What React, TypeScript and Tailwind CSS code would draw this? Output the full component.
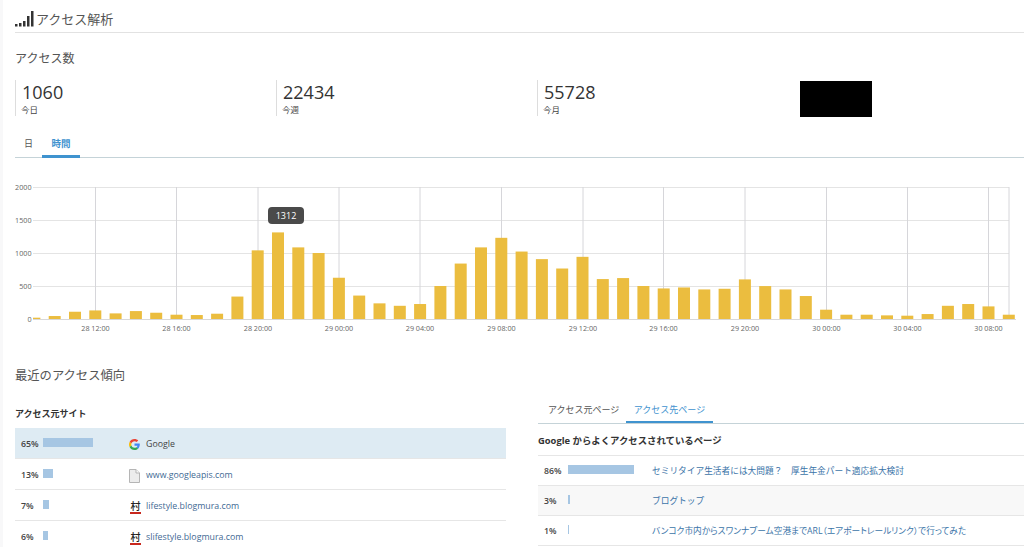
const FONT = "font-['Open_Sans','Noto_Sans_CJK_JP',sans-serif]";

const hours = [
  20, 45, 110, 130, 85, 120, 95, 65, 60, 80, 340, 1040, 1312, 1085, 1000, 625, 355,
  237, 200, 227, 500, 840, 1085, 1230, 1022, 907, 765, 942, 605, 620, 500, 463, 478,
  448, 458, 600, 499, 448, 348, 141, 65, 65, 55, 50, 75, 200, 227, 191, 65,
];

const ticks = [
  { x: 95.5, label: "28 12:00" },
  { x: 176.5, label: "28 16:00" },
  { x: 258, label: "28 20:00" },
  { x: 339, label: "29 00:00" },
  { x: 420, label: "29 04:00" },
  { x: 501.5, label: "29 08:00" },
  { x: 583, label: "29 12:00" },
  { x: 663.5, label: "29 16:00" },
  { x: 745, label: "29 20:00" },
  { x: 826.5, label: "30 00:00" },
  { x: 907.5, label: "30 04:00" },
  { x: 988.5, label: "30 08:00" },
];

const sources = [
  { pct: "65%", bar: 50, name: "Google", icon: "google", active: true },
  { pct: "13%", bar: 10, name: "www.googleapis.com", icon: "file" },
  { pct: "7%", bar: 6, name: "lifestyle.blogmura.com", icon: "mura" },
  { pct: "6%", bar: 5, name: "slifestyle.blogmura.com", icon: "mura" },
];

const pages = [
  { pct: "86%", bar: 66, title: "セミリタイア生活者には大問題？　厚生年金パート適応拡大検討" },
  { pct: "3%", bar: 2, title: "ブログトップ", alt: true },
  { pct: "1%", bar: 1, title: "バンコク市内からスワンナプーム空港までARL（エアポートレールリンク）で行ってみた", tight: true },
];

function SignalIcon() {
  return (
    <svg width="20" height="16" viewBox="0 0 20 16" fill="#333">
      <rect x="0" y="13" width="2.5" height="2.5" />
      <rect x="4" y="12" width="2.5" height="3.5" />
      <rect x="8" y="10" width="2.5" height="5.5" />
      <rect x="12" y="5" width="2.5" height="10.5" />
      <rect x="16" y="0" width="2.5" height="15.5" />
    </svg>
  );
}

function GoogleIcon() {
  return (
    <svg width="11" height="11" viewBox="0 0 48 48">
      <path fill="#EA4335" d="M24 9.5c3.5 0 6.700 1.200 9.200 3.600l6.900-6.900C35.900 2.400 30.500 0 24 0 14.600 0 6.500 5.400 2.600 13.200l8 6.200C12.500 13.600 17.800 9.500 24 9.500z" />
      <path fill="#4285F4" d="M47 24.500c0-1.600-.1-3.100-.4-4.500H24v9h13c-.6 3-2.300 5.500-4.800 7.200l7.700 6C44.400 37.900 47 31.800 47 24.500z" />
      <path fill="#FBBC05" d="M10.600 28.600c-.5-1.500-.8-3-.8-4.600s.3-3.100.8-4.600l-8-6.200C.9 16.500 0 20.100 0 24s.9 7.500 2.600 10.800l8-6.200z" />
      <path fill="#34A853" d="M24 48c6.500 0 11.900-2.100 15.900-5.800l-7.700-6c-2.200 1.400-4.900 2.300-8.200 2.300-6.200 0-11.500-4.100-13.400-9.900l-8 6.200C6.500 42.600 14.600 48 24 48z" />
    </svg>
  );
}

function FileIcon() {
  return (
    <svg width="11" height="14" viewBox="0 0 11 14">
      <path d="M.5.5h6.500l3.500 3.500v9.500h-10z" fill="#ececec" stroke="#b5b5b5" />
      <path d="M7 .5v3.500h3.500" fill="#fafafa" stroke="#b5b5b5" />
    </svg>
  );
}

function SourceIcon({ type }: { type: string }) {
  if (type === "google") return <GoogleIcon />;
  if (type === "file") return <FileIcon />;
  return (
    <span className="ml-px block w-[11px] border-b-2 border-[#c8281e] text-center text-[10px] font-medium leading-[12px] text-[#222]">
      村
    </span>
  );
}

function Chart() {
  const base = 319;
  const scale = 132 / 2000;
  return (
    <div className="relative mt-[18px] h-[160px] w-full">
      <svg width="1024" height="160" viewBox="0 176 1024 160" className="block">
        {[187, 220, 253, 286].map((y) => (
          <line key={y} x1="33" x2="1009" y1={y + 0.5} y2={y + 0.5} stroke="#e4e4e4" />
        ))}
        {ticks.map((t) => (
          <line key={t.x} x1={t.x} x2={t.x} y1="187" y2={base} stroke="#d6d6da" />
        ))}
        <line x1="1009" x2="1009" y1="187" y2={base} stroke="#d6d6da" />
        {hours.map((v, i) => {
          const cx = 34.4 + i * 20.3;
          const left = Math.max(33, cx - 6);
          return (
            <rect
              key={i}
              x={left}
              y={base - v * scale}
              width={cx + 6 - left}
              height={v * scale}
              fill="#ebbd3f"
            />
          );
        })}
        <line x1="33" x2="1016" y1={base + 0.5} y2={base + 0.5} stroke="#d8d8d8" />
        {[
          ["2000", 190],
          ["1500", 223],
          ["1000", 256],
          ["500", 289],
          ["0", 322],
        ].map(([label, y]) => (
          <text key={label} x="31.5" y={y} textAnchor="end" fontSize="7.2" fill="#666">
            {label}
          </text>
        ))}
        {ticks.map((t) => (
          <text key={t.label} x={t.x} y="331" textAnchor="middle" fontSize="7.2" fill="#666">
            {t.label}
          </text>
        ))}
      </svg>
      <div className="absolute left-[268px] top-[31px] flex h-[17px] w-[36px] items-center justify-center rounded-[4px] bg-[#4a4a4a] text-[9px] text-white">
        1312
      </div>
    </div>
  );
}

function Stat({ value, label }: { value: string; label: string }) {
  return (
    <div className="h-[36px] w-[261px] shrink-0 border-l border-[#dddddd] pl-[5px]">
      <div className="mt-px ml-px h-[23px] text-[18px] leading-[23px] text-[#333]">{value}</div>
      <div className="text-[8.500px] leading-[12px] text-[#444]">{label}</div>
    </div>
  );
}

export default function App() {
  return (
    <div className={`${FONT} relative h-[547px] w-[1024px] overflow-hidden bg-white text-[#333]`}>
      <div className="absolute inset-y-0 left-0 w-[3px] bg-[#f8f8f9]" />
      <div className="pl-[15px]">
        <div className="flex h-[33px] items-center gap-px border-b border-[#e2e2e2] pt-[5px]">
          <SignalIcon />
          <h1 className="text-[13px] leading-5 text-[#555]">アクセス解析</h1>
        </div>

        <h2 className="mt-[17px] h-[20px] text-[12px] leading-[18px] text-[#555]">アクセス数</h2>

        <div className="mt-[10px] flex items-start">
          <Stat value="1060" label="今日" />
          <Stat value="22434" label="今週" />
          <Stat value="55728" label="今月" />
          <div className="mt-px ml-[2px] h-[36px] w-[72px] bg-black" />
        </div>

        <div className="mt-[17px] flex h-[24px] items-start border-b border-[#c5d3d8] pl-[9px]">
          <span className="mt-[3px] w-[18px] text-[9px] text-[#555]">日</span>
          <div className="flex h-[24px] w-[38px] justify-center border-b-[3px] border-[#3f93cf] pt-[3px] text-[9.500px] font-bold text-[#3f93cf]">
            時間
          </div>
        </div>
      </div>

      <Chart />

      <div className="pl-[15px]">
        <h2 className="mt-[31px] h-[20px] text-[12.300px] leading-[18px] text-[#555]">最近のアクセス傾向</h2>

        <div className="mt-[3px] flex items-start">
          <div className="w-[491px] shrink-0">
            <h3 className="mt-[14px] h-[24px] pt-px text-[9px] font-bold leading-[18px] text-[#333]">アクセス元サイト</h3>
            <div>
              {sources.map((s) => (
                <div
                  key={s.name}
                  className={`flex h-[31px] items-center border-b border-[#e6e6e6] pt-[2px] text-[8.800px] ${s.active ? "bg-[#deebf3]" : ""}`}
                >
                  <span className="mt-[2px] w-[28px] shrink-0 pl-[6px] font-semibold text-[#444]">{s.pct}</span>
                  <div className="-mt-[3px] w-[86px] shrink-0">
                    <div className="h-[9px] bg-[#a6c6e3]" style={{ width: s.bar }} />
                  </div>
                  <div className="mt-[1px] flex w-[17px] shrink-0 items-center">
                    <SourceIcon type={s.icon} />
                  </div>
                  <span className={`mt-[2px] ${s.active ? "text-[#444]" : "text-[#3f6a94]"}`}>{s.name}</span>
                </div>
              ))}
            </div>
          </div>

          <div className="ml-[32px] min-w-0 flex-1">
            <div className="flex h-[34px] border-b border-[#c5d3d8] text-[9px]">
              <span className="ml-[10px] w-[78px] whitespace-nowrap pt-[13px] text-[#555]">アクセス元ページ</span>
              <div className="w-[87px] whitespace-nowrap border-b-[2px] border-[#3f93cf] pt-[13px] text-center text-[#3f93cf]">
                アクセス先ページ
              </div>
            </div>
            <h3 className="h-[32px] border-b border-[#e6e6e6] pt-[8px] text-[9.400px] font-bold leading-[18px] text-[#333]">
              Google からよくアクセスされているページ
            </h3>
            {pages.map((p) => (
              <div
                key={p.pct}
                className={`flex h-[30px] items-center border-b border-[#e6e6e6] pt-[2px] text-[8.700px] ${p.alt ? "bg-[#f8f8f8]" : ""}`}
              >
                <span className="w-[30px] shrink-0 pl-[6px] font-semibold text-[#444]">{p.pct}</span>
                <div className="-mt-[5px] w-[84px] shrink-0">
                  <div className="h-[9px] bg-[#a6c6e3]" style={{ width: p.bar }} />
                </div>
                <span className={`whitespace-nowrap text-[#3b74a8] ${p.tight ? "[font-feature-settings:'palt']" : ""}`}>{p.title}</span>
              </div>
            ))}
          </div>
        </div>
      </div>
    </div>
  );
}
